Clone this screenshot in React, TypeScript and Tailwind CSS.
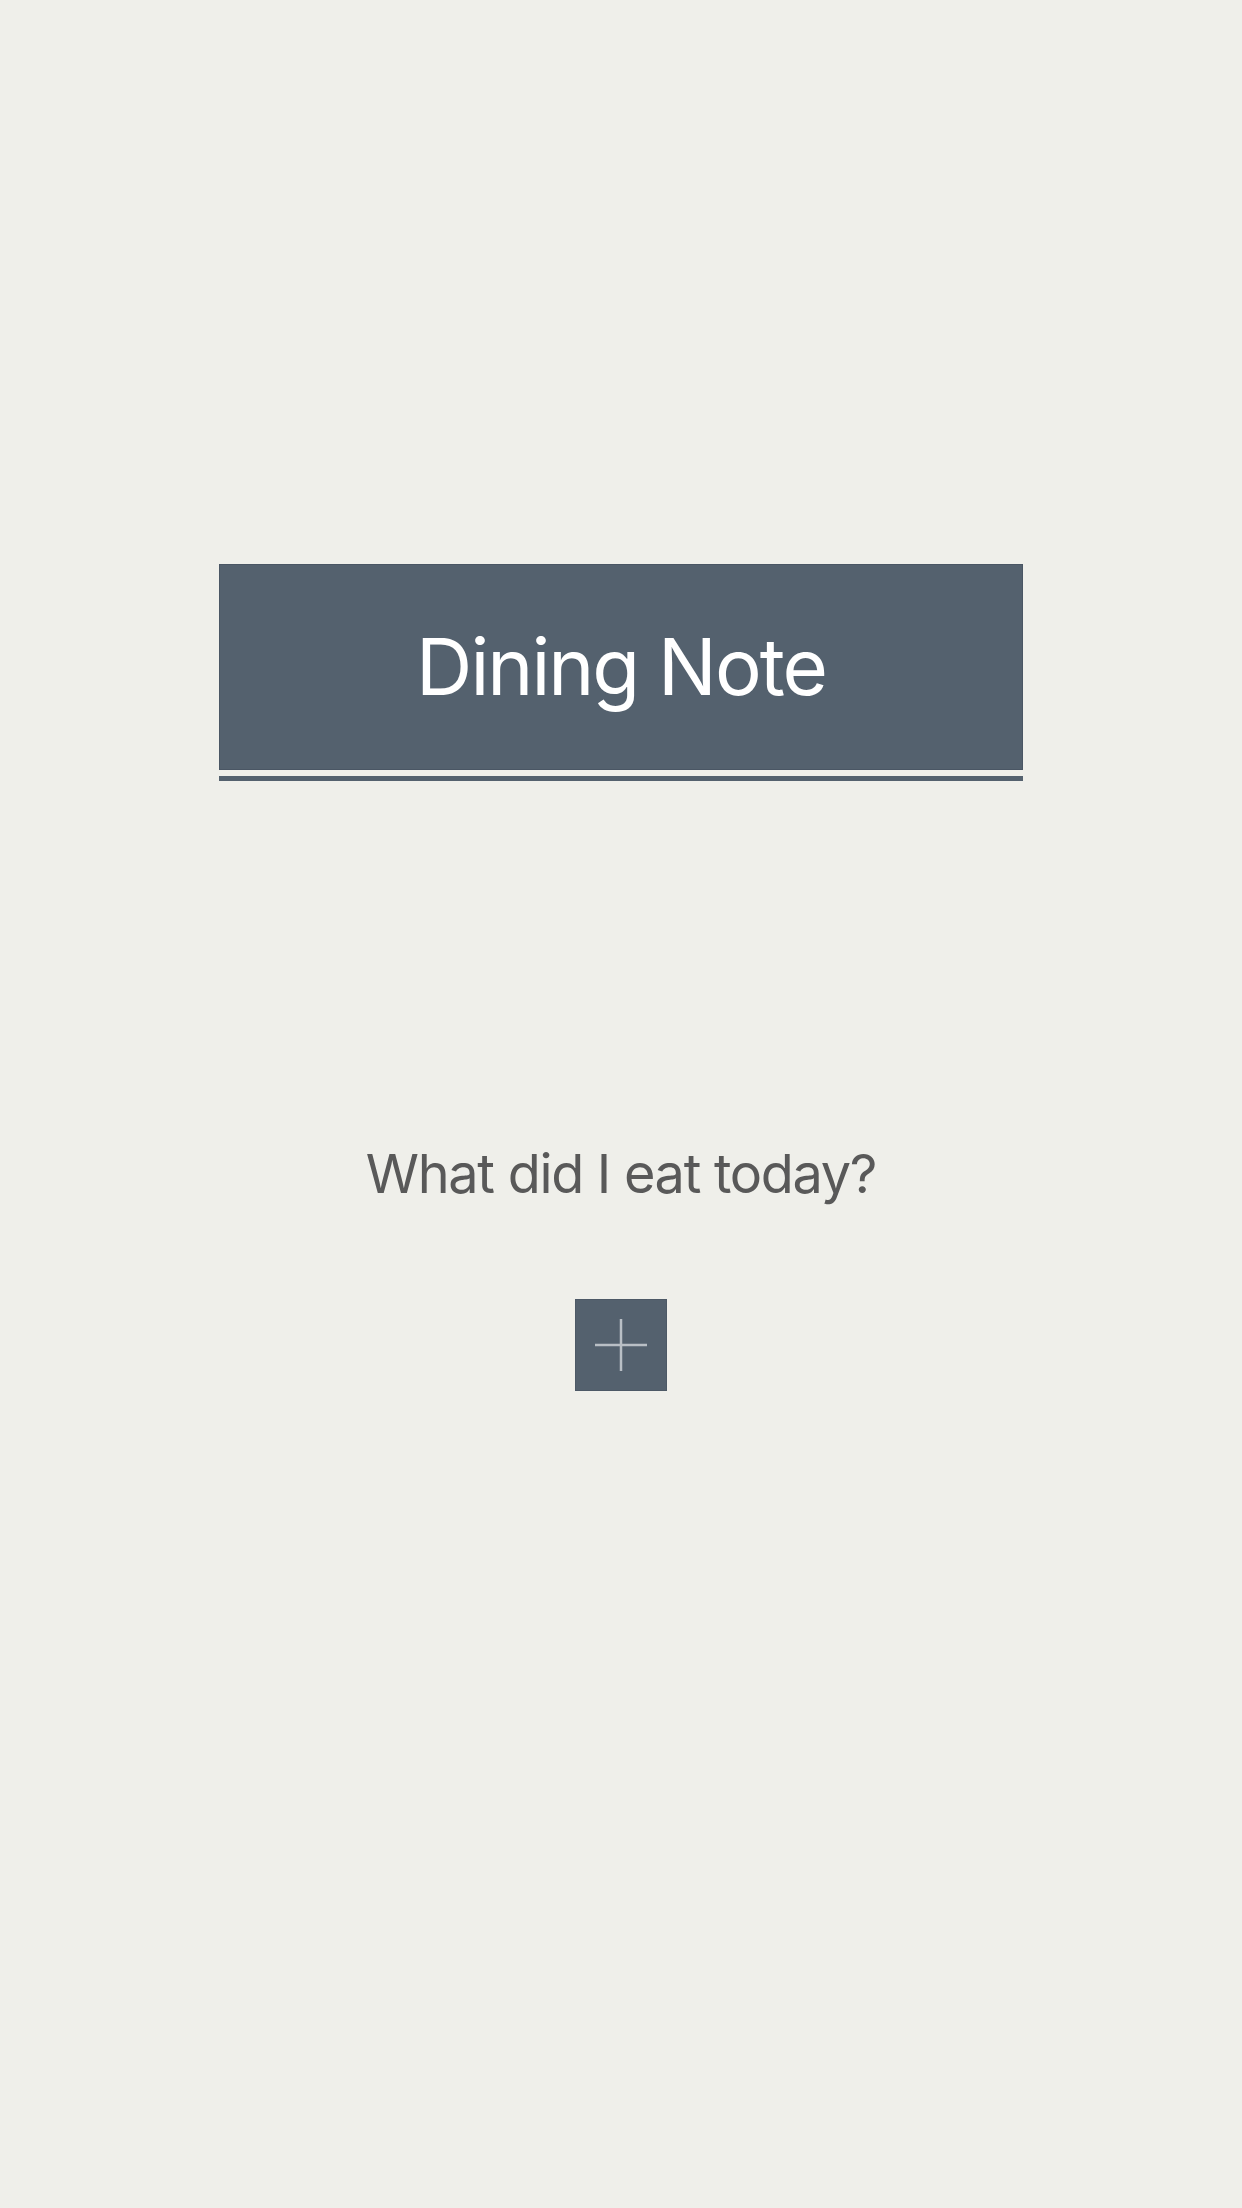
export default function App() {
  return (
    <div
      className="min-h-[2208px] w-full bg-[#efefea] flex flex-col items-center"
      style={{ fontFamily: 'Inter, "Noto Sans", sans-serif' }}
    >
      <div className="mt-[564px] w-[804px] flex flex-col">
        <div className="h-[206px] bg-[#54616e] border border-[#4a5664] flex items-center justify-center">
          <h1 className="text-[78px] leading-none text-white font-normal tracking-[-2px]">Dining Note</h1>
        </div>
        <div className="mt-[6px] h-[5px] bg-[#54616e]"></div>
      </div>
      <p className="mt-[366px] text-[54px] leading-none text-[#595959] tracking-[-1.3px]">What did I eat today?</p>
      <button className="mt-[98px] w-[92px] h-[92px] bg-[#54616e] border border-[#4d5966] flex items-center justify-center">
        <svg width="52" height="52" viewBox="0 0 52 52">
          <path d="M0 26H52M26 0V52" stroke="#b9bfc5" strokeWidth="2.5" />
        </svg>
      </button>
    </div>
  );
}
